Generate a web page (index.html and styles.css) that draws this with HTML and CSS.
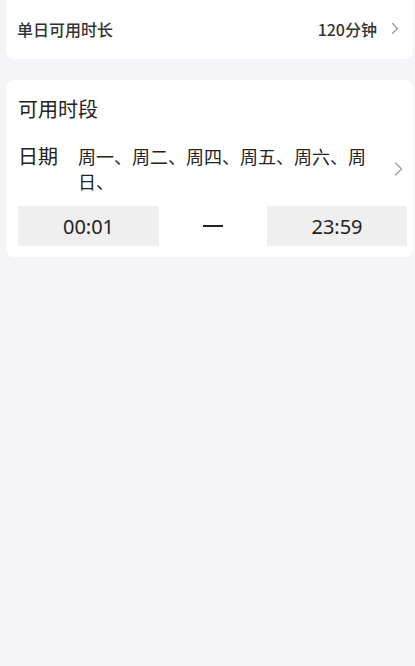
FILE: index.html
```html
<!DOCTYPE html>
<html lang="zh-CN">
<head>
<meta charset="utf-8">
<title>可用时段</title>
<link rel="stylesheet" href="styles.css">
</head>
<body>
<div class="page">
  <div class="card row-card">
    <span class="row-label">单日可用时长</span>
    <span class="row-value">120分钟</span>
    <svg class="chev chev-sm" width="8" height="13" viewBox="0 0 8 13"><polyline points="1.5,1.5 6.5,6.5 1.5,11.5" fill="none" stroke="#9a9a9a" stroke-width="1.3" stroke-linecap="round" stroke-linejoin="round"/></svg>
  </div>
  <div class="card period-card">
    <div class="period-title">可用时段</div>
    <div class="date-row">
      <span class="date-label">日期</span>
      <span class="date-days">周一、周二、周四、周五、周六、周日、</span>
      <svg class="chev chev-md" width="9" height="14" viewBox="0 0 9 14"><polyline points="1.5,1 7.5,7 1.5,13" fill="none" stroke="#a0a0a0" stroke-width="1.3" stroke-linecap="round" stroke-linejoin="round"/></svg>
    </div>
    <div class="time-row">
      <div class="time-box">00:01</div>
      <div class="time-sep"><span class="dash"></span></div>
      <div class="time-box">23:59</div>
    </div>
  </div>
</div>
</body>
</html>
```
FILE: styles.css
```css
html, body {
  margin: 0;
  padding: 0;
}
body {
  background: #f4f4f9;
  font-family: "Noto Sans CJK SC", "Noto Sans", sans-serif;
  color: #222;
  width: 415px;
  height: 666px;
  overflow: hidden;
}
.page {
  display: flex;
  flex-direction: column;
}
.card {
  background: #fff;
  margin: 0 2px 0 6px;
  border-radius: 8px;
}
.row-card {
  height: 59px;
  box-sizing: border-box;
  padding: 0 14px 2px 11px;
  border-radius: 0 0 8px 8px;
  display: flex;
  align-items: center;
  font-size: 16px;
  font-weight: 500;
  color: #333;
}
.row-label {
  flex: 1;
}
.row-value {
  margin-right: 14px;
}
.chev {
  display: block;
}
.period-card {
  margin-top: 21px;
  padding: 15px 6px 11px 12px;
}
.period-title {
  font-size: 20px;
  line-height: 28px;
}
.date-row {
  margin-top: 21px;
  display: flex;
  align-items: center;
}
.date-label {
  font-size: 20px;
  line-height: 24px;
  align-self: flex-start;
  width: 60px;
  flex: none;
}
.date-days {
  font-size: 18px;
  line-height: 25px;
  width: 302px;
  flex: none;
}
.chev-md {
  margin-left: auto;
  margin-right: 4px;
}
.time-row {
  margin-top: 12px;
  display: grid;
  grid-template-columns: 141px 1fr 140px;
  align-items: center;
}
.time-box {
  background: #efefef;
  height: 40px;
  display: flex;
  align-items: center;
  justify-content: center;
  font-size: 20px;
  font-family: "Noto Sans", "Noto Sans CJK SC", sans-serif;
}
.time-sep {
  display: flex;
  justify-content: center;
}
.dash {
  display: block;
  width: 20px;
  height: 2px;
  background: #222;
}
```
